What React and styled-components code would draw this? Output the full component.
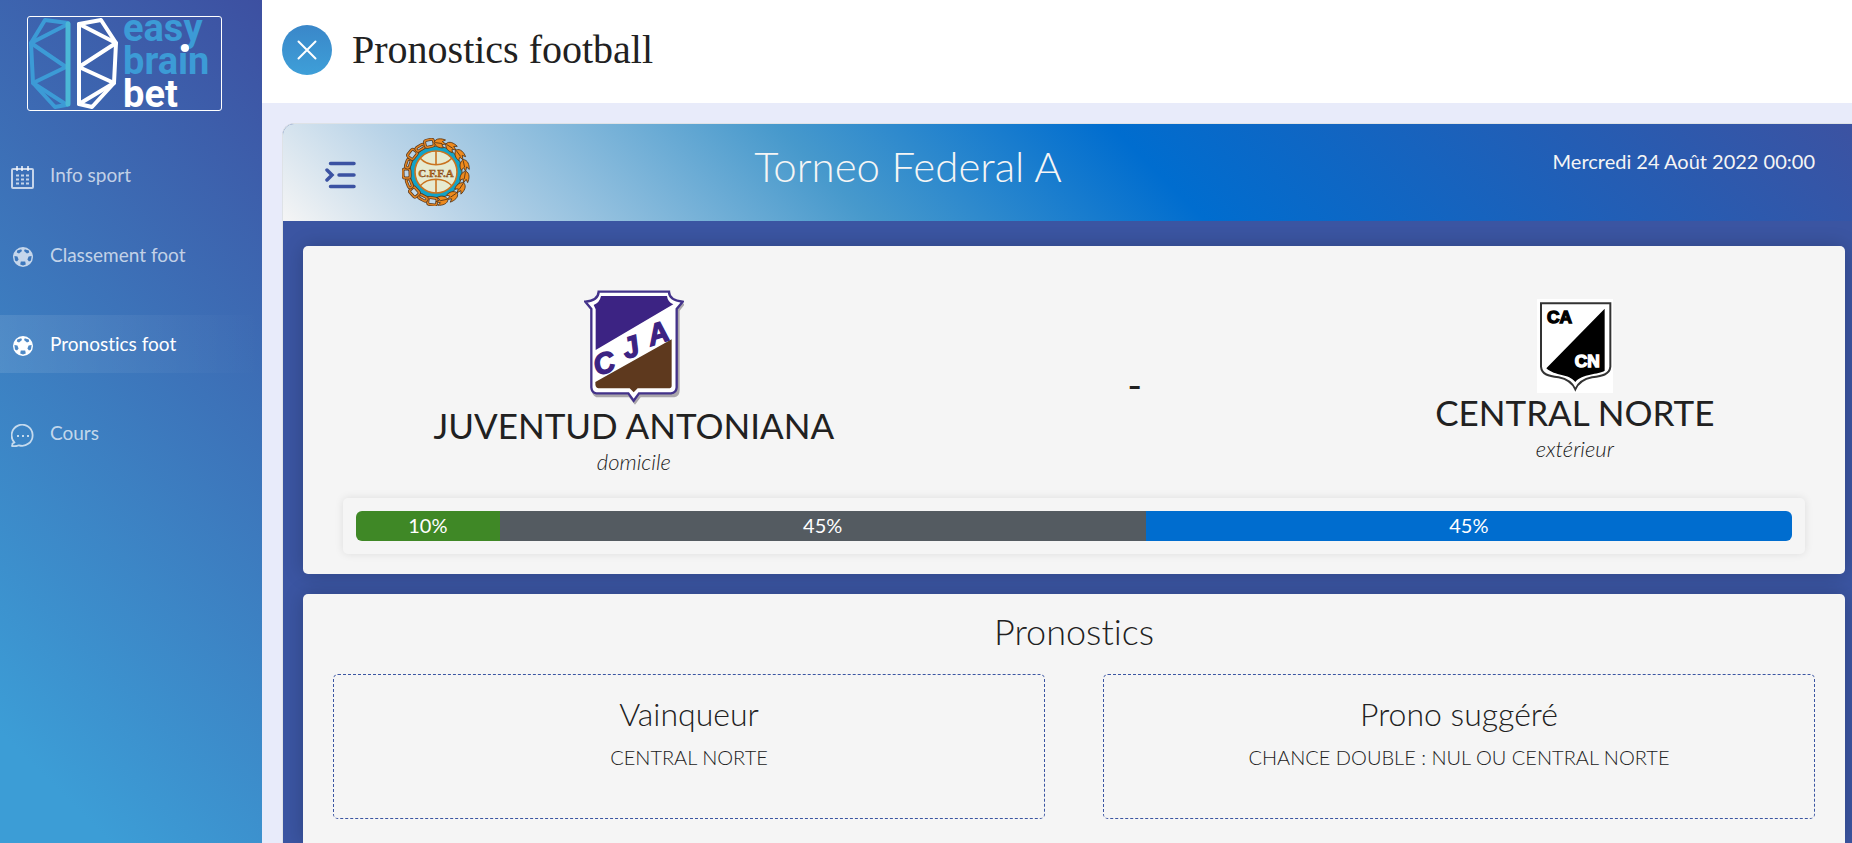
import React, { useState } from 'react'
import styled, { createGlobalStyle } from 'styled-components'

const GlobalStyle = createGlobalStyle`
    * {
        box-sizing: border-box;
    }

    body {
        margin: 0;
        overflow: hidden;
        background: #e8ebfa;
        color: #212121;
        font-family: Lato, "Open Sans", sans-serif;
        font-size: 20px;
        font-variant-ligatures: none;
    }

    h1, h2, h3, p {
        margin: 0;
        font-weight: 400;
    }
`

const Layout = styled.div`
    display: grid;
    grid-template-columns: 262px minmax(0, 1fr);
    height: 100vh;
    overflow: hidden;
`

// ---- sidebar

const Sidebar = styled.aside`
    padding-top: 16px;
    background: linear-gradient(45deg, #3c9dd6 10%, #3d50a1);
`

const LogoLink = styled.a`
    display: block;
    width: 195px;
    height: 95px;
    margin: 0 0 35px 27px;
    border: 1px solid #fff;
    border-radius: 3px;

    svg {
        overflow: visible;
    }
`

const Menu = styled.nav`
    display: flex;
    flex-direction: column;
    gap: 31px;
`

const MenuLink = styled.a`
    display: flex;
    align-items: center;
    gap: 16px;
    height: 58px;
    padding: 0 0 2px 11px;
    color: ${(props) => (props.$active ? '#fff' : 'rgba(255, 255, 255, 0.7)')};
    background: ${(props) => (props.$active ? 'linear-gradient(90deg, rgba(255, 255, 255, 0.1), rgba(255, 255, 255, 0))' : 'none')};
    font-size: 19px;
    text-decoration: none;

    &:first-child {
        margin-bottom: -9px;
    }
`

const MenuIcon = styled.span`
    display: flex;
    justify-content: center;
    width: 23px;
    padding-top: 6px;
`

// ---- top bar

const Main = styled.main`
    display: flex;
    flex-direction: column;
    overflow: hidden;
`

const TopBar = styled.header`
    display: flex;
    flex-shrink: 0;
    align-items: center;
    gap: 20px;
    height: 103px;
    padding: 0 20px 4px;
    background: #fff;
`

const CloseButton = styled.button`
    display: flex;
    align-items: center;
    justify-content: center;
    width: 50px;
    height: 50px;
    padding: 0;
    border: 0;
    border-radius: 50%;
    background: linear-gradient(#3a87c9, #3e9fd8);
    cursor: pointer;
`

const PageTitle = styled.h1`
    font-family: "Liberation Serif", serif;
    font-size: 40px;
    line-height: 48px;
`

// ---- match panel, runs past the right edge like a row with gutters

const Panel = styled.section`
    display: flex;
    flex: 1;
    flex-direction: column;
    margin: 20px -14px 0 20px;
    border: 1px solid #dee2e6;
    border-bottom: 0;
    border-radius: 12px 12px 0 0;
    background: #3b55a2;
    overflow: hidden;
`

const PanelHeader = styled.header`
    display: grid;
    flex-shrink: 0;
    grid-template-columns: 231px 7fr 5fr;
    height: 97px;
    padding-top: 12px;
    background: linear-gradient(45deg, #f5f5f5, #bad4e8 11%, #4799cc 35%, #006dcf 55%, #3d52a1);
    color: #f5f5f5;
`

const HeaderIcons = styled.div`
    display: flex;
    align-items: center;
    gap: 46px;
    padding: 0 0 14px 42px;
`

const IconButton = styled.button`
    display: flex;
    padding: 7px 0 0;
    border: 0;
    background: none;
    cursor: pointer;
`

const LeagueName = styled.h2`
    font-size: 42px;
    font-weight: 300;
    line-height: 60px;
    text-align: center;
`

const MatchDate = styled.time`
    padding-right: 50px;
    font-size: 20px;
    line-height: 50px;
    text-align: right;
`

const Cards = styled.div`
    display: flex;
    flex: 1;
    flex-direction: column;
    gap: 20px;
    padding: 25px 20px 0;
`

const Card = styled.section`
    border-radius: ${(props) => (props.$last ? '5px 5px 0 0' : '5px')};
    background: #f5f5f5;
    box-shadow: 0 0 20px rgba(0, 0, 0, 0.2);
    flex-grow: ${(props) => (props.$last ? 1 : 0)};
`

const Teams = styled.div`
    display: flex;
    align-items: center;
    justify-content: space-around;
    margin: 0 -16px;
    padding-top: 40px;
`

const Team = styled.div`
    display: flex;
    flex-direction: column;
    align-items: center;
`

const TeamName = styled.h3`
    font-size: 35px;
    line-height: 38px;
`

const Side = styled.em`
    font-size: 22px;
    font-weight: 300;
    line-height: 36px;
`

const Score = styled.span`
    padding-top: 4px;
    font-size: 40px;
    line-height: 48px;
`

const Odds = styled.div`
    margin: 18px 40px 20px;
    padding: 13px;
    border-radius: 5px;
    box-shadow: 0 0 8px rgba(0, 0, 0, 0.1);
`

const Bar = styled.div`
    display: flex;
    height: 30px;
    border-radius: 6px;
    overflow: hidden;
`

const BarPart = styled.div`
    background: ${(props) => props.$color};
    color: #fff;
    line-height: 28px;
    text-align: center;
`

const SectionTitle = styled.h2`
    padding-top: 17px;
    font-size: 36px;
    font-weight: 300;
    line-height: 40px;
    text-align: center;
`

const Tips = styled.div`
    display: grid;
    grid-template-columns: 1fr 1fr;
    gap: 58px;
    padding: 23px 30px 0;
`

const Tip = styled.article`
    height: 145px;
    padding-top: 20px;
    border: 1px dashed #3b55a2;
    border-radius: 5px;
    text-align: center;
`

const TipTitle = styled.h3`
    font-size: 32px;
    font-weight: 300;
    line-height: 38px;
`

const TipText = styled.p`
    padding-top: 12px;
    font-size: 20px;
    font-weight: 300;
    line-height: 24px;
`

// ---- drawings

const Logo = () => (
    <svg width="193" height="93" viewBox="1 1 193 93" role="img" aria-label="easy brain bet">
        <g fill="none" strokeWidth="4" strokeLinejoin="round" strokeLinecap="round">
            <g stroke="#3c9bd6">
                <path d="M41 7 L18 4 L4 27 L6 67 L28 91 L39 89" />
                <path d="M41 8 L4 27 L39 51 L6 67 L40 89" />
            </g>
            <path stroke="#4bb8d6" strokeWidth="5" d="M41 8 V88" />
            <g stroke="#fff">
                <path d="M52 8 L74 4 L89 27 L87 67 L65 91 L52 88 Z" />
                <path d="M52 8 L89 27 L52 51 L87 67 L52 88" />
            </g>
        </g>
        <g fontFamily="Roboto, sans-serif" fontWeight="700" fontSize="38" fill="#3c9bd6">
            <text x="96" y="25">easy</text>
            <text x="96" y="58">brain</text>
            <text x="96" y="91" fill="#fff">bet</text>
        </g>
        <circle cx="158" cy="32" r="4" fill="#fff" />
    </svg>
)

const CalendarIcon = () => (
    <svg width="23" height="23" viewBox="0 0 23 23" fill="none" stroke="currentColor">
        <rect x="1" y="3" width="21" height="19" strokeWidth="2" rx="1" />
        <path d="M6 0v5M11 0v5M17 0v5" strokeWidth="2" />
        <path d="M5 9.500h13M5 13.500h13M5 17.500h13" strokeWidth="2" strokeDasharray="3 2" />
    </svg>
)

const BallIcon = () => (
    <svg width="20" height="20" viewBox="-10 -10 20 20" fill="currentColor">
        <path
            fillRule="evenodd"
            d="M0 -10A10 10 0 1 1 0 10A10 10 0 1 1 0 -10Z
               M-5.800 -6.600L-1.800 -7.800L-1 -6L-4 -3.600L-6.200 -4.400Z
               M5.800 -6.600L1.800 -7.800L1 -6L4 -3.600L6.200 -4.400Z
               M-8.600 -1L-5.600 -0.600L-4.400 2.600L-6 4.400L-8 3.400Z
               M8.600 -1L5.600 -0.600L4.400 2.600L6 4.400L8 3.400Z
               M-2.200 4.600H2.200L2.800 7.600L0 8.600L-2.800 7.600Z"
        />
    </svg>
)

const ChatIcon = () => (
    <svg width="23" height="23" viewBox="0 0 23 23" fill="none" stroke="currentColor" strokeWidth="1.800">
        <path d="M3.500 18.500 A10.500 10.500 0 1 1 8 21.300 C6 22.300 3 22.300 1 22 C1.500 21 1.500 20 1.500 19.500 Z" strokeLinejoin="round" />
        <path d="M6 12h2M11 12h2M16 12h2" strokeWidth="2" />
    </svg>
)

const CloseIcon = () => (
    <svg width="20" height="20" viewBox="0 0 20 20" stroke="#fff" strokeWidth="2" strokeLinecap="round">
        <path d="M1.500 1.500l17 17M18.500 1.500l-17 17" />
    </svg>
)

const IndentIcon = () => (
    <svg width="31" height="28" viewBox="0 0 31 28" fill="none" stroke="#3b52a2" strokeWidth="3.500" strokeLinecap="round">
        <path d="M5.500 2.500H29M14 14H29M5.500 25.500H29" />
        <path d="M2 9l5 5-5 5" />
    </svg>
)

const LeagueLogo = () => {
    const chain = [188, 208, 228, 248, 268, 288, 308, 328, 348]
    const leaves = [8, 31, 54, 77, 100, 123, 146, 168]

    return (
        <svg width="68" height="68" viewBox="-34 -34 68 68" role="img" aria-label="C.F.F.A">
            <circle r="26" fill="#11a3c8" stroke="#6b4a24" />
            {chain.map((a, i) => (
                <g key={a} transform={`rotate(${a}) translate(0 -29)`} fill="none">
                    <rect x="-5" y={i % 2 ? -2 : -4} width="9" height={i % 2 ? 4 : 7} rx="2" stroke="#5a3a1e" strokeWidth="3" />
                    <rect x="-5" y={i % 2 ? -2 : -4} width="9" height={i % 2 ? 4 : 7} rx="2" stroke="#e08324" strokeWidth="1.500" />
                </g>
            ))}
            {leaves.map((a) => (
                <g key={a} transform={`rotate(${a}) translate(0 -29)`} fill="#ee8a1d" stroke="#553517" strokeWidth="0.800">
                    <path d="M-6 0 C-5 -5 1 -5 5 -4 L2 -2 L6 0 L2 1 L4 4 C0 5 -4 4 -6 0 Z" />
                    <path d="M-5 0H2" />
                </g>
            ))}
            <g fill="none" stroke="#c9731f" strokeWidth="1.600">
                <circle r="21" fill="#e6ead0" />
                <path d="M0 -21V-7M0 8V21M-16 -14C-8 -5 8 -5 16 -14M-16 14C-8 5 8 5 16 14" />
            </g>
            <text y="5" textAnchor="middle" fontFamily="Liberation Serif, serif" fontWeight="700" fontSize="11" fill="#c9731f" stroke="#7a4416" strokeWidth="0.400">C.F.F.A</text>
        </svg>
    )
}

const AntonianaCrest = () => (
    <svg width="100" height="120" viewBox="75 48 300 360" role="img" aria-label="Juventud Antoniana">
        <path d="M124 72H334L340 88L378 102L362 122V360Q362 380 346 382H245L228 404L210 382H112Q98 376 98 360Z" fill="#aaa6ab" />
        <path d="M119 65H330Q330 90 371 95L353 117V352Q352 368 336 370H240L224 392L208 370H112Q98 368 97 352V117L79 95Q118 92 119 65Z" fill="#fff" stroke="#43328a" strokeWidth="7" />
        <path d="M126 78H324Q326 96 343 103L110 240V118L104 105Q122 98 126 78Z" fill="#3c2383" />
        <path d="M338 208V347Q338 355 328 355H236L224 367L212 355H118Q108 354 109 336Z" fill="#5e391e" />
        <g fontFamily="Liberation Sans, sans-serif" fontWeight="700" fontStyle="italic" fontSize="88" fill="#3c2383" stroke="#3c2383" strokeWidth="4">
            <text x="0" y="0" transform="translate(114 318) rotate(-18)">C</text>
            <text x="0" y="0" transform="translate(200 268) rotate(-18)">J</text>
            <text x="0" y="0" transform="translate(276 228) rotate(-18)">A</text>
        </g>
    </svg>
)

const NorteCrest = () => (
    <svg width="76" height="94" viewBox="75 57 228 282" role="img" aria-label="Central Norte">
        <path d="M75 57H303V339H75Z" fill="#fff" />
        <path d="M87 70H295V260C293 284 270 288 240 292C210 298 198 310 190 328C182 310 170 298 140 292C110 288 89 284 87 260Z" fill="#fff" stroke="#333" strokeWidth="6" />
        <path d="M278 86V272C260 284 210 280 190 306C170 280 130 290 103 265Z" fill="#000" />
        <g fontFamily="Liberation Sans, sans-serif" fontWeight="700" fontSize="52" strokeWidth="4">
            <text x="105" y="129" fill="#000" stroke="#000">CA</text>
            <text x="188" y="261" fill="#fff" stroke="#fff">CN</text>
        </g>
    </svg>
)

const links = [
    { label: 'Info sport', icon: <CalendarIcon /> },
    { label: 'Classement foot', icon: <BallIcon /> },
    { label: 'Pronostics foot', icon: <BallIcon /> },
    { label: 'Cours', icon: <ChatIcon /> }
]

const odds = [
    { id: 'home', value: 10, color: '#3f8826' },
    { id: 'draw', value: 45, color: '#545b61' },
    { id: 'away', value: 45, color: '#006dcf' }
]

const tips = [
    { title: 'Vainqueur', text: 'CENTRAL NORTE' },
    { title: 'Prono suggéré', text: 'CHANCE DOUBLE : NUL OU CENTRAL NORTE' }
]

const App = () => {

    const [active, setActive] = useState('Pronostics foot')

    return (
        <Layout>
            <GlobalStyle />
            <Sidebar>
                <LogoLink href="#"><Logo /></LogoLink>
                <Menu>
                    {links.map(({ label, icon }) => (
                        <MenuLink key={label} href="#" $active={label === active} onClick={() => setActive(label)}>
                            <MenuIcon>{icon}</MenuIcon>
                            {label}
                        </MenuLink>
                    ))}
                </Menu>
            </Sidebar>

            <Main>
                <TopBar>
                    <CloseButton aria-label="Fermer"><CloseIcon /></CloseButton>
                    <PageTitle>Pronostics football</PageTitle>
                </TopBar>

                <Panel>
                    <PanelHeader>
                        <HeaderIcons>
                            <IconButton aria-label="Menu"><IndentIcon /></IconButton>
                            <LeagueLogo />
                        </HeaderIcons>
                        <LeagueName>Torneo Federal A</LeagueName>
                        <MatchDate dateTime="2022-08-24T00:00">Mercredi 24 Août 2022 00:00</MatchDate>
                    </PanelHeader>

                    <Cards>
                        <Card>
                            <Teams>
                                <Team>
                                    <AntonianaCrest />
                                    <TeamName>JUVENTUD ANTONIANA</TeamName>
                                    <Side>domicile</Side>
                                </Team>
                                <Score>-</Score>
                                <Team>
                                    <NorteCrest />
                                    <TeamName>CENTRAL NORTE</TeamName>
                                    <Side>extérieur</Side>
                                </Team>
                            </Teams>
                            <Odds>
                                <Bar>
                                    {odds.map(({ id, value, color }) => (
                                        <BarPart key={id} $color={color} style={{ width: `${value}%` }}>{value}%</BarPart>
                                    ))}
                                </Bar>
                            </Odds>
                        </Card>

                        <Card $last>
                            <SectionTitle>Pronostics</SectionTitle>
                            <Tips>
                                {tips.map(({ title, text }) => (
                                    <Tip key={title}>
                                        <TipTitle>{title}</TipTitle>
                                        <TipText>{text}</TipText>
                                    </Tip>
                                ))}
                            </Tips>
                        </Card>
                    </Cards>
                </Panel>
            </Main>
        </Layout>
    )

}

export default App
